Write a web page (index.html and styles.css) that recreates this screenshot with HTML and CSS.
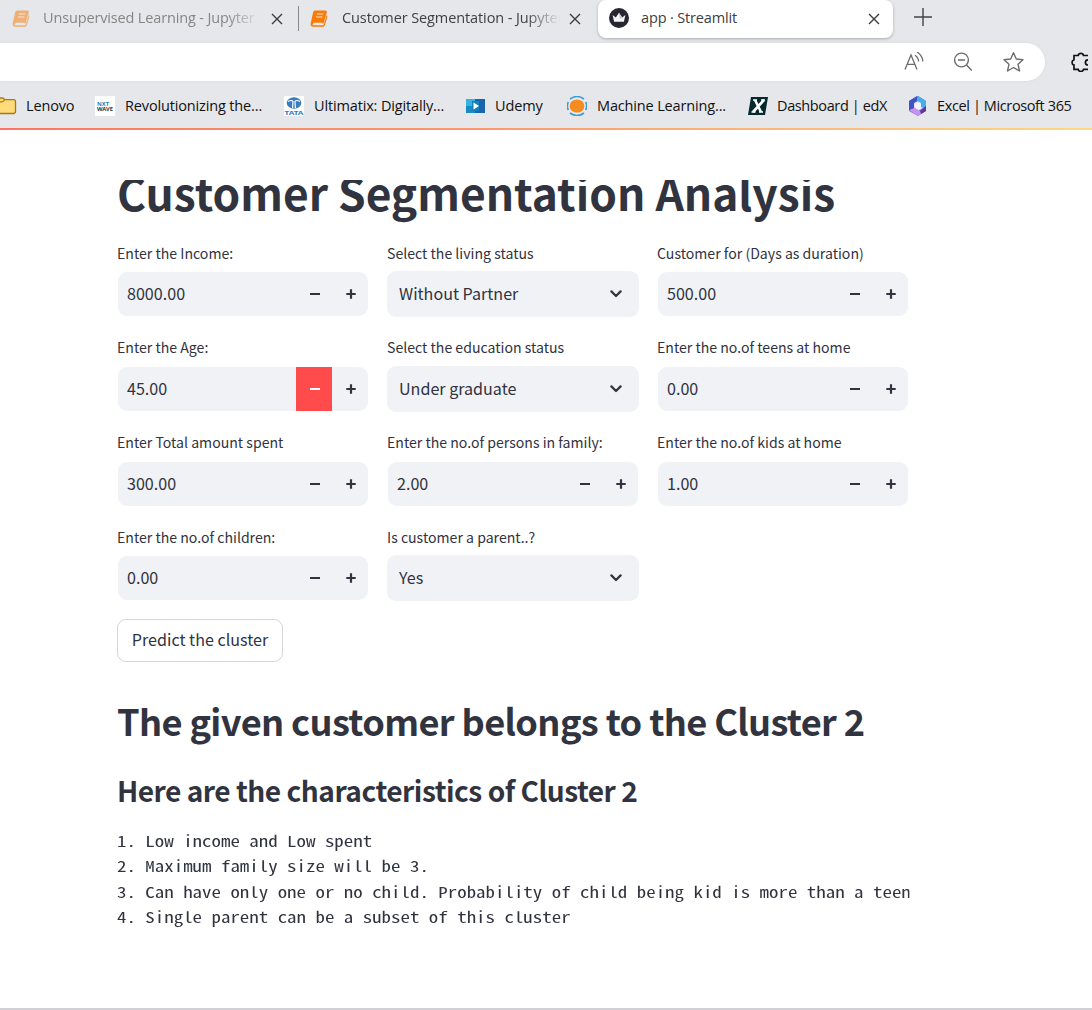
FILE: index.html
```
<!DOCTYPE html>
<html lang="en">
<head>
<meta charset="utf-8">
<title>app · Streamlit</title>
<link rel="stylesheet" href="styles.css">
</head>
<body>
<svg width="0" height="0" class="defs">
  <symbol id="close" viewBox="0 0 12 12"><path d="M1 1L11 11M11 1L1 11" fill="none" stroke="#3c3c3c" stroke-width="1.4"/></symbol>
  <symbol id="book" viewBox="0 0 18 18"><path d="M5 1.5h10.6q1.7 0 1.3 1.6l-3 10.3q-.4 1.3-1.6 1.3H3.6q-1 0-1 .8t1 .8h9q1 0 1.4-1.200l2.700-9q1 .5.6 1.800l-2.500 8.300q-.5 1.600-2 1.600H3q-2.600-.2-2.400-3L3.200 3q.4-1.500 1.800-1.500z" fill="#f97a06"/><path d="M6.800 5h6.500M6 8h6.500M3.500 14.300h9" stroke="#ffe5c8" stroke-width="1.200"/></symbol>
  <symbol id="minus" viewBox="0 0 10 10"><path d="M0 5H10" stroke="currentColor" stroke-width="2.200"/></symbol>
  <symbol id="plus" viewBox="0 0 10 10"><path d="M.3 5H9.700M5 .3V9.700" stroke="currentColor" stroke-width="2.200"/></symbol>
  <symbol id="chevron" viewBox="0 0 12 8"><path d="M1.400 1.400L6 6L10.600 1.400" fill="none" stroke="currentColor" stroke-width="2.200" stroke-linecap="round" stroke-linejoin="round"/></symbol>
</svg>

<header class="browser">
  <div class="tabs">
    <div class="tab tab-sleeping">
      <svg class="book" ><use href="#book"/></svg><span class="tab-title fade">Unsupervised Learning - Jupyter</span><svg class="close"><use href="#close"/></svg>
    </div>
    <div class="tab tab-second">
      <svg class="book"><use href="#book"/></svg><span class="tab-title fade">Customer Segmentation - Jupyter</span><svg class="close"><use href="#close"/></svg>
    </div>
    <div class="tab tab-active">
      <svg class="crown" viewBox="0 0 20 20"><circle cx="10" cy="10" r="10" fill="#262730"/><path d="M3.600 7l3.200 2.500L10 4.800l3.200 4.700L16.400 7l-1.500 6.800H5.100z" fill="#f4f4f4"/><path d="M10 5l3.200 4.500L16.400 7 11 11z" fill="#c4c4c8"/></svg><span class="tab-title">app · Streamlit</span><svg class="close"><use href="#close"/></svg>
    </div>
    <svg class="new-tab" viewBox="0 0 18 18"><path d="M0 9H18M9 0V18" stroke="#444" stroke-width="1.400"/></svg>
  </div>
  <div class="toolbar">
    <div class="address">
      <svg width="20" height="20" viewBox="0 0 20 20" fill="none" stroke="#6c6c6c" stroke-width="1.300"><path d="M1 17.500L7 3L13 17.500M3.200 12.400H10.800M11 3.200Q14.500 5.500 14.600 9.500M13 0Q18.600 3.500 18.800 9.500"/></svg>
      <svg width="20" height="20" viewBox="0 0 20 20" fill="none" stroke="#6c6c6c" stroke-width="1.400"><circle cx="8.500" cy="8" r="6.900"/><path d="M5 8H12M13.500 13L18.800 18.500"/></svg>
      <svg width="22" height="22" viewBox="0 0 22 22" fill="none" stroke="#6c6c6c" stroke-width="1.400" stroke-linejoin="round"><path d="M11.500 1.700L14.300 8L21 8.700L16 13.200L17.500 20L11.500 16.500L5.500 20L7 13.200L2 8.700L8.700 8Z"/></svg>
    </div>
    <svg class="puzzle" width="18" height="20" viewBox="0 0 18 20" fill="none" stroke="#111" stroke-width="1.700"><path d="M18 3.500H13.500A2.700 2.700 0 0 0 8.200 3.500H4V7.800A2.700 2.700 0 0 0 4 13V17.300H8.200A2.700 2.700 0 0 0 13.500 17.300H18M18 7.800A2.500 2.500 0 0 0 18 13"/></svg>
  </div>
  <nav class="bookmarks">
    <a class="bookmark first"><svg width="17" height="20" viewBox="0 0 17 20"><path d="M-4 2H2Q4 2 4.500 3.700H13.500Q15.500 3.700 15.500 5.700V15Q15.500 17.500 13.500 17.500H-4Z" fill="#ffdc79" stroke="#a57a13" stroke-width="1.300"/><path d="M-2 6H2Q4 6 4.500 3.700" fill="#efb92e" stroke="#a57a13"/></svg><span>Lenovo</span></a>
    <a class="bookmark"><svg width="20" height="20" viewBox="0 0 20 20"><path fill="#fff" d="M0 0h20v20H0z"/><text x="2" y="9.500" class="nxt" fill="#2483b7" textLength="12" lengthAdjust="spacingAndGlyphs">NXT</text><text x="2" y="14.500" class="nxt" fill="#26394a" textLength="16" lengthAdjust="spacingAndGlyphs">WAVE</text></svg><span>Revolutionizing the...</span></a>
    <a class="bookmark"><svg width="20" height="20" viewBox="0 0 20 20"><path fill="#fff" d="M0 0h20v20H0z"/><ellipse cx="10" cy="7" rx="7.300" ry="5.700" fill="#397cbe"/><path d="M4 5.500Q8 3.500 9 5.500L8.600 12M16 5.500Q12 3.500 11 5.500L11.400 12" fill="none" stroke="#fff" stroke-width="1.200"/><text x=".5" y="18.700" class="tata" fill="#397cbe" textLength="19" lengthAdjust="spacingAndGlyphs">TATA</text></svg><span>Ultimatix: Digitally...</span></a>
    <a class="bookmark"><svg width="20" height="20" viewBox="0 0 20 20"><path d="M1 3H20V17H1z" fill="#1765ad"/><path d="M1 3H10V10H1z" fill="#31b4df"/><path d="M1 10H10V17H1z" fill="#168bc5"/><path d="M7 5H14V15H7z" fill="#1680bb"/><path d="M8.500 6.500L14 10L8.500 13.500z" fill="#fff"/></svg><span>Udemy</span></a>
    <a class="bookmark"><svg width="20" height="20" viewBox="0 0 20 20"><ellipse cx="10" cy="10" rx="7.400" ry="6.600" fill="#f68b1f"/><path d="M3 3Q10-2 17 3M3 17Q10 22 17 17M1.300 6Q-.6 10 1.300 14M18.700 6Q20.600 10 18.700 14" fill="none" stroke="#3b9bd4" stroke-width="1.600"/></svg><span>Machine Learning...</span></a>
    <a class="bookmark tight"><svg width="20" height="20" viewBox="0 0 20 20"><path d="M3 1H20L17 19H0z" fill="#05292e"/><path d="M7 4L13 16M16 4L5 16" stroke="#fff" stroke-width="2.600"/><path d="M5 4H9M13 4H17M3.500 16H7.500M11 16H15" stroke="#fff" stroke-width="1.500"/></svg><span>Dashboard | edX</span></a>
    <a class="bookmark tight"><svg width="20" height="20" viewBox="0 0 20 20"><path d="M10 0L18 5V11L13 9V6L10 5L6 7V14L1 12V5z" fill="#4a62d8"/><path d="M10 0L18 5V13L13 11V7L8 4z" fill="#48aeea"/><path d="M1 6L6 3V12L10 15L18 10V15L10 20L1 15z" fill="#8c62d8"/><path d="M1 14L8 11L11 15L18 14L10 20z" fill="#c693ef"/><path d="M12 15L18 10V15L13 18z" fill="#5b399c"/><path d="M1 5L9 0V4L6 7V12L1 14z" fill="#4353c4"/><ellipse cx="10" cy="10" rx="3" ry="3.200" fill="#f1f4fc"/></svg><span>Excel | Microsoft 365</span></a>
  </nav>
</header>
<div class="decoration"></div>

<main class="app">
  <div class="title-clip"><h1>Customer Segmentation Analysis</h1></div>
  <section class="form">
    <div class="field"><label>Enter the Income:</label><div class="number"><span>8000.00</span><button><svg><use href="#minus"/></svg></button><button><svg><use href="#plus"/></svg></button></div></div>
    <div class="field"><label>Select the living status</label><div class="select"><span>Without Partner</span><svg><use href="#chevron"/></svg></div></div>
    <div class="field"><label>Customer for (Days as duration)</label><div class="number"><span>500.00</span><button><svg><use href="#minus"/></svg></button><button><svg><use href="#plus"/></svg></button></div></div>
    <div class="field"><label>Enter the Age:</label><div class="number"><span>45.00</span><button class="pressed"><svg><use href="#minus"/></svg></button><button><svg><use href="#plus"/></svg></button></div></div>
    <div class="field"><label>Select the education status</label><div class="select"><span>Under graduate</span><svg><use href="#chevron"/></svg></div></div>
    <div class="field"><label>Enter the no.of teens at home</label><div class="number"><span>0.00</span><button><svg><use href="#minus"/></svg></button><button><svg><use href="#plus"/></svg></button></div></div>
    <div class="field"><label>Enter Total amount spent</label><div class="number"><span>300.00</span><button><svg><use href="#minus"/></svg></button><button><svg><use href="#plus"/></svg></button></div></div>
    <div class="field"><label>Enter the no.of persons in family:</label><div class="number"><span>2.00</span><button><svg><use href="#minus"/></svg></button><button><svg><use href="#plus"/></svg></button></div></div>
    <div class="field"><label>Enter the no.of kids at home</label><div class="number"><span>1.00</span><button><svg><use href="#minus"/></svg></button><button><svg><use href="#plus"/></svg></button></div></div>
    <div class="field"><label class="low">Enter the no.of children:</label><div class="number"><span>0.00</span><button><svg><use href="#minus"/></svg></button><button><svg><use href="#plus"/></svg></button></div></div>
    <div class="field"><label class="low">Is customer a parent..?</label><div class="select"><span>Yes</span><svg><use href="#chevron"/></svg></div></div>
  </section>
  <button class="predict">Predict the cluster</button>
  <h2>The given customer belongs to the Cluster 2</h2>
  <h3>Here are the characteristics of Cluster 2</h3>
  <pre>1. Low income and Low spent
2. Maximum family size will be 3.
3. Can have only one or no child. Probability of child being kid is more than a teen
4. Single parent can be a subset of this cluster</pre>
</main>
<footer class="edge"></footer>
</body>
</html>
```
FILE: styles.css
```
* { box-sizing: border-box; }
body { margin: 0; width: 1092px; height: 1010px; overflow: hidden; display: flex; flex-direction: column; background: #fff; color: #31333f; font-family: "Noto Sans CJK SC", "Source Sans Pro", sans-serif; }
svg { display: block; flex: none; }
.defs { position: absolute; }
button { font: inherit; color: inherit; border: 0; padding: 0; background: none; }

.browser { height: 128px; flex: none; background: #e6e7eb; font-family: "Open Sans", "Noto Sans", sans-serif; font-size: 14.5px; letter-spacing: -.15px; color: #111; }
.tabs { height: 43px; display: flex; align-items: flex-start; }
.tab { height: 38px; display: flex; align-items: center; color: #404040; }
.tab-title { flex: 1; min-width: 0; white-space: nowrap; overflow: hidden; line-height: 22px; margin-bottom: 2px; }
.fade { -webkit-mask-image: linear-gradient(90deg, #000 calc(100% - 34px), transparent); mask-image: linear-gradient(90deg, #000 calc(100% - 34px), transparent); }
.close { width: 12px; height: 12px; }
.book { width: 18px; height: 18px; margin-bottom: 2px; }
.tab-sleeping { width: 298px; padding: 0 15px 0 12px; color: #858585; }
.tab-sleeping .book { opacity: .5; }
.tab-sleeping .tab-title { margin-left: 13px; margin-right: 10px; }
.tab-second { width: 300px; padding: 0 17px 0 12px; background: linear-gradient(#888, #888) 0 6px / 1px 25px no-repeat; }
.tab-second .tab-title { margin-left: 14px; margin-right: 9px; letter-spacing: -.1px; }
.tab-active { width: 295px; padding: 0 13px 0 11px; background: #fff; border-radius: 8px; box-shadow: 0 1px 3px #0004; }
.crown { width: 20px; height: 20px; margin-bottom: 2px; }
.tab-active .tab-title { margin-left: 12px; }
.new-tab { width: 18px; height: 18px; margin: 8px 0 0 21px; }
.toolbar { height: 38px; display: flex; align-items: center; justify-content: space-between; }
.address { width: 1045px; height: 38px; background: #fff; border-radius: 0 19px 19px 0; display: flex; align-items: center; justify-content: flex-end; gap: 29px; padding-right: 21px; box-shadow: 0 0 3px #0001; }
.puzzle { margin-right: 4px; }
.bookmarks { height: 47px; display: grid; grid-template-columns: 95px 189px 181px 102px 181px 160px 1fr; align-items: center; padding-top: 3px; }
.bookmark { display: flex; align-items: center; gap: 10px; white-space: nowrap; }
.bookmark span { padding-bottom: 2px; }
.first { gap: 9px; }
.tight { letter-spacing: -.38px; gap: 9px; }
.nxt { font: bold 5px "Noto Sans"; letter-spacing: 0; }
.tata { font: bold 6px "Noto Sans"; letter-spacing: 0; }
.decoration { height: 2px; flex: none; background: linear-gradient(90deg, #fb7662, #fa9a6e 45%, #fdd884); }

.app { padding-left: 117px; width: 909px; flex: 1; }
.title-clip { margin-top: 50px; height: 58px; overflow: hidden; }
h1, h2, h3 { margin: 0; white-space: nowrap; }
h1 { font-size: 44.3px; line-height: 60px; margin-top: -18px; font-weight: 700; }
.form { display: grid; grid-template-columns: repeat(3, 252px); grid-auto-rows: 94.8px; column-gap: 18px; padding-top: 4px; }
label { display: block; font-size: 14.1px; line-height: 21px; height: 30px; white-space: nowrap; }
.field:nth-child(-n+3) label, .low { padding-top: 1px; }
.number, .select { display: flex; align-items: center; background: #f0f2f6; border-radius: 9px; font-size: 16.1px; }
.number { height: 44px; margin: 0 1px; padding-left: 9px; overflow: hidden; }
.number span, .select span { flex: 1; padding-bottom: 2px; }
.number button { width: 36px; height: 44px; display: grid; place-items: center; padding-left: 1px; }
.number svg { width: 10px; height: 10px; }
.pressed { background: #ff4b4b; color: #fff; }
.select { height: 46px; margin-top: -1px; padding: 0 17px 0 12px; }
.select svg { width: 12px; height: 8px; }
.predict { display: block; width: 166px; height: 43px; margin-top: -2px; padding-bottom: 3px; border: 1px solid #d5d6d8; border-radius: 9px; font-size: 16.1px; white-space: nowrap; }
h2 { font-size: 36.2px; line-height: 48px; margin-top: 34px; font-weight: 600; letter-spacing: -.65px; }
h3 { font-size: 28.1px; line-height: 38px; margin-top: 27px; font-weight: 600; letter-spacing: -.49px; }
pre { margin: 19px 0 0; font-family: "Noto Sans Mono CJK SC", "Liberation Mono", monospace; font-size: 15px; line-height: 25.3px; overflow: hidden; width: 629px; transform: scaleX(1.26); transform-origin: 0 0; }
.edge { height: 2px; flex: none; background: #d1d1d5; }
```
